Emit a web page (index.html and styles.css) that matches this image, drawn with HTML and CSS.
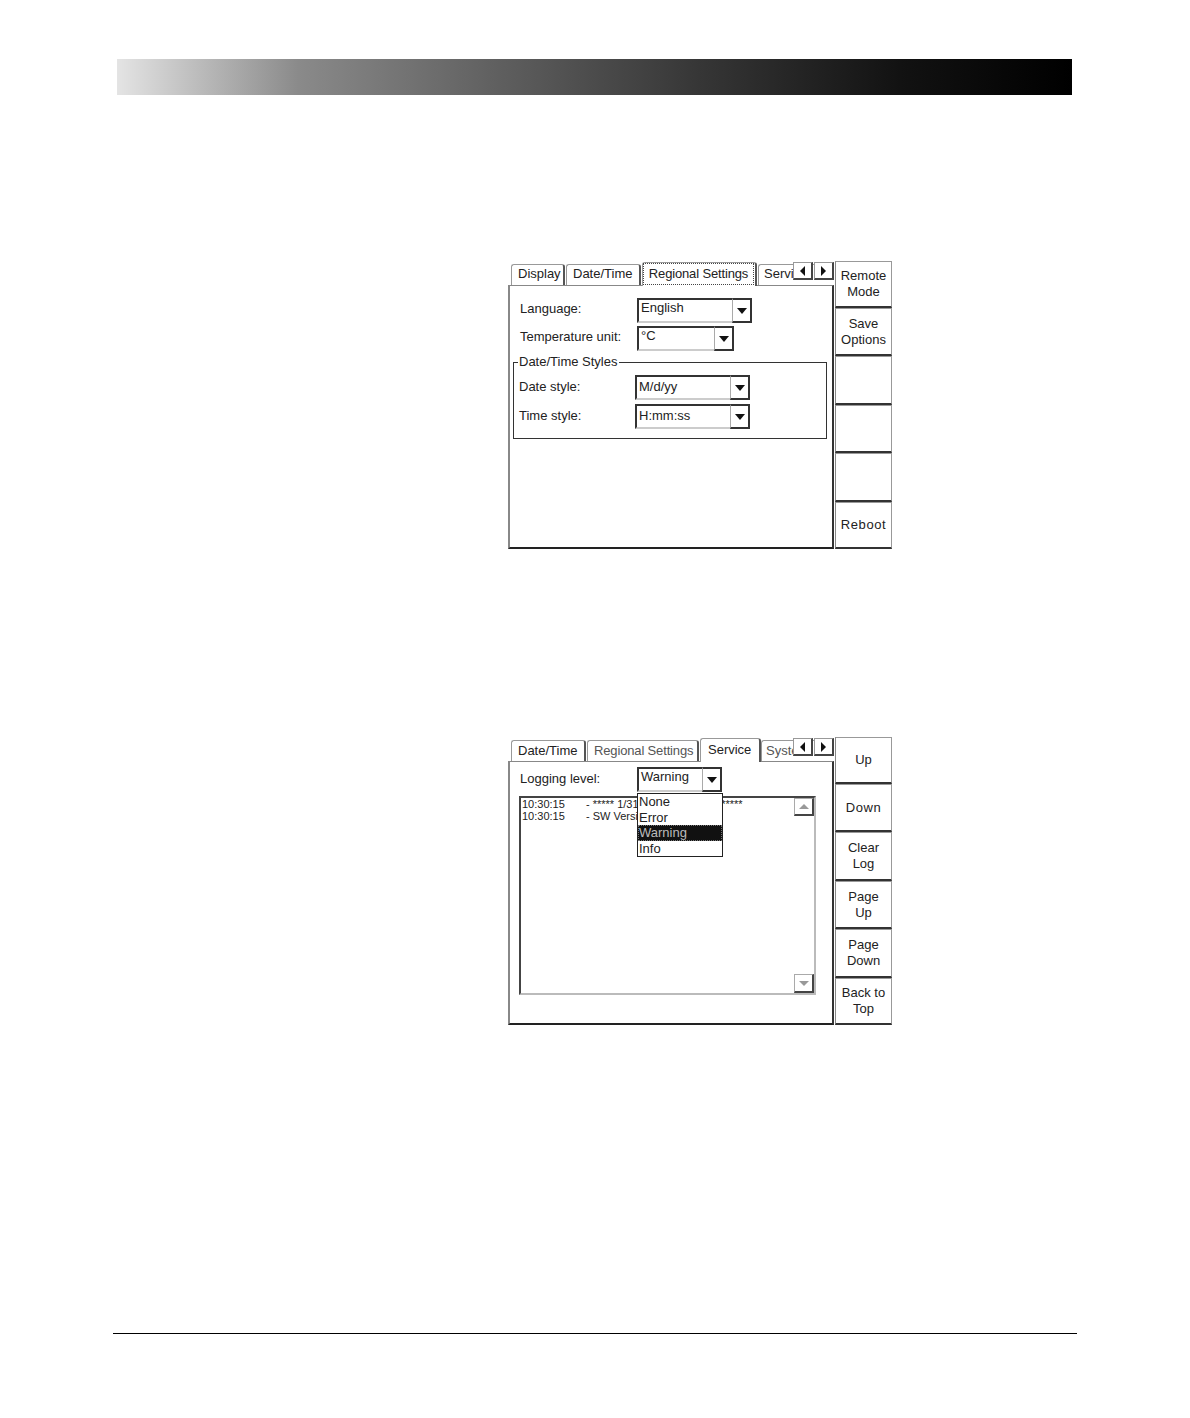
FILE: index.html
```html
<!DOCTYPE html>
<html lang="en">
<head>
<meta charset="utf-8">
<title>Settings screens</title>
<link rel="stylesheet" href="styles.css">
</head>
<body>
<div class="page-header"></div>

<section class="screen screen-first">
  <div class="main">
    <div class="tabs">
      <div class="tab tab-display">Display</div>
      <div class="tab tab-date">Date/Time</div>
      <div class="tab tab-focus"><span class="focus-ring">Regional Settings</span></div>
      <div class="tab tab-clip">Service</div>
      <div class="tab-arrows">
        <div class="arrow-btn"><span class="tri-left"></span></div>
        <div class="arrow-btn"><span class="tri-right"></span></div>
      </div>
    </div>
    <div class="panel">
      <div class="row row-top">
        <span class="label">Language:</span>
        <div class="combo combo-wide"><span class="value">English</span><span class="drop"><span class="tri-down"></span></span></div>
      </div>
      <div class="row row-top row-temp">
        <span class="label">Temperature unit:</span>
        <div class="combo combo-mid"><span class="value">°C</span><span class="drop"><span class="tri-down"></span></span></div>
      </div>
      <fieldset class="group">
        <legend>Date/Time Styles</legend>
        <div class="row row-group">
          <span class="label label-group">Date style:</span>
          <div class="combo combo-wide"><span class="value">M/d/yy</span><span class="drop"><span class="tri-down"></span></span></div>
        </div>
        <div class="row row-group row-group-next">
          <span class="label label-group">Time style:</span>
          <div class="combo combo-wide"><span class="value">H:mm:ss</span><span class="drop"><span class="tri-down"></span></span></div>
        </div>
      </fieldset>
    </div>
  </div>
  <div class="softkeys">
    <div class="key">Remote<br>Mode</div>
    <div class="key">Save<br>Options</div>
    <div class="key"></div>
    <div class="key"></div>
    <div class="key"></div>
    <div class="key key-spaced">Reboot</div>
  </div>
</section>

<section class="screen screen-second">
  <div class="main">
    <div class="tabs">
      <div class="tab tab-date">Date/Time</div>
      <div class="tab tab-regional">Regional Settings</div>
      <div class="tab tab-active">Service</div>
      <div class="tab tab-clip tab-muted">System</div>
      <div class="tab-arrows">
        <div class="arrow-btn"><span class="tri-left"></span></div>
        <div class="arrow-btn"><span class="tri-right"></span></div>
      </div>
    </div>
    <div class="panel panel-log">
      <div class="row row-top row-logging">
        <span class="label">Logging level:</span>
        <div class="combo combo-small"><span class="value">Warning</span><span class="drop"><span class="tri-down"></span></span></div>
      </div>
      <div class="logbox">
        <div class="log-line"><span class="log-time">10:30:15</span><span>- ***** 1/31/2007 &nbsp;10:30:15 &nbsp;*****</span></div>
        <div class="log-line"><span class="log-time">10:30:15</span><span>- SW Version</span></div>
        <div class="scroll-btn scroll-up"><span class="tri-up"></span></div>
        <div class="scroll-btn scroll-down"><span class="tri-down tri-gray"></span></div>
      </div>
      <ul class="dropdown">
        <li>None</li>
        <li>Error</li>
        <li class="selected">Warning</li>
        <li>Info</li>
      </ul>
    </div>
  </div>
  <div class="softkeys">
    <div class="key">Up</div>
    <div class="key key-spaced">Down</div>
    <div class="key">Clear<br>Log</div>
    <div class="key">Page<br>Up</div>
    <div class="key">Page<br>Down</div>
    <div class="key">Back to<br>Top</div>
  </div>
</section>

<div class="page-rule"></div>
</body>
</html>
```

FILE: styles.css
```css
* { box-sizing: border-box; }

html, body { margin: 0; padding: 0; background: #fff; }

body {
  width: 1190px;
  height: 1418px;
  overflow: hidden;
  font-family: "Liberation Sans", Arial, sans-serif;
  font-size: 13px;
  color: #222;
}

.page-header {
  width: 955px;
  height: 36px;
  margin: 59px 0 0 117px;
  background: linear-gradient(90deg, #e4e4e4 0%, #8a8a8a 19%, #5f5f5f 40%, #363636 61%, #121212 82%, #000 100%);
}

.screen {
  display: flex;
  width: 384px;
  height: 288px;
  margin-left: 508px;
}
.screen-first { margin-top: 166px; }
.screen-second { margin-top: 188px; }

.page-rule {
  width: 964px;
  height: 1px;
  margin: 308px 0 0 113px;
  background: #000;
}

/* left part */
.main {
  display: flex;
  flex-direction: column;
  width: 326px;
  height: 288px;
  margin-right: 1px;
}

.tabs {
  position: relative;
  z-index: 1;
  display: flex;
  align-items: flex-end;
  flex: 0 0 25px;
  height: 25px;
  padding-left: 3px;
  overflow: hidden;
}

.tab {
  flex: none;
  height: 21px;
  margin: 0 1px 1px 0;
  padding: 0 5px 0 6px;
  border: 1px solid #999;
  border-bottom: 0;
  border-right: 2px solid #555;
  border-radius: 3px 3px 0 0;
  line-height: 17px;
  white-space: nowrap;
}
.tab-display { width: 54px; }
.tab-date { width: 75px; }
.tab-focus {
  width: 115px;
  height: 24px;
  margin-bottom: 0;
  padding: 0 1px 0 0;
  background: #fff;
  line-height: 20px;
}
.focus-ring {
  display: block;
  height: 22px;
  border: 1px dotted #444;
  letter-spacing: -0.15px;
  text-align: center;
}
.tab-clip { width: 60px; border-right: 0; padding-left: 5px; }
.tab-regional { width: 112px; color: #555; letter-spacing: -0.15px; }
.tab-muted { padding-left: 4px; color: #555; }
.screen-second .tab { line-height: 19px; }
.screen-second .tab-active {
  width: 61px;
  height: 24px;
  margin: 0;
  padding-left: 7px;
  background: #fff;
  line-height: 21px;
}

.tab-arrows {
  position: absolute;
  top: 1px;
  right: 0;
  display: flex;
  gap: 1px;
}
.arrow-btn {
  display: flex;
  align-items: center;
  justify-content: center;
  width: 20px;
  height: 18px;
  background: #fff;
  border: 1px solid #999;
  border-right: 2px solid #444;
  border-bottom: 2px solid #444;
}

.tri-left, .tri-right, .tri-up, .tri-down {
  display: block;
  width: 0;
  height: 0;
  border-style: solid;
}
.tri-left { border-width: 5px 5px 5px 0; border-color: transparent #111 transparent transparent; }
.tri-right { border-width: 5px 0 5px 5px; border-color: transparent transparent transparent #111; }
.tri-down { border-width: 6px 5px 0; border-color: #111 transparent transparent; }
.tri-up { border-width: 0 5px 5px; border-color: transparent transparent #999; }
.tri-gray { border-width: 5px 5px 0; border-color: #999 transparent transparent; }

.panel {
  position: relative;
  flex: 1;
  margin-top: -1px;
  padding: 12px 0 0 0;
  background: #fff;
  border-top: 1px solid #888;
  border-left: 2px solid #888;
  border-right: 2px solid #333;
  border-bottom: 2px solid #222;
}
.panel-log { padding-top: 5px; }

.row { display: flex; align-items: center; height: 25px; }
.row-top { padding-left: 10px; }
.row-temp { margin-top: 3px; }
.label { flex: 0 0 117px; padding-bottom: 5px; }
.row-logging .label { padding-bottom: 3px; }
.label-group { flex-basis: 116px; padding-bottom: 2px; }

.combo {
  display: flex;
  height: 25px;
  border: 2px solid #333;
  border-right-color: #ccc;
  border-bottom-color: #ccc;
  background: #fff;
}
.combo-wide { width: 115px; }
.combo-mid { width: 97px; }
.combo-small { width: 85px; }
.value { flex: 1; padding-left: 2px; line-height: 16px; }
.row-group .value { line-height: 19px; }
.drop {
  display: flex;
  align-items: center;
  justify-content: center;
  flex: 0 0 20px;
  margin: -2px -2px -2px 0;
  border: 1px solid #aaa;
  border-right: 2px solid #333;
  border-bottom: 2px solid #333;
  border-top: 2px solid #333;
}

.group {
  height: 85px;
  margin: 3px 5px 0 3px;
  padding: 5px 0 0 5px;
  border: 1px solid #333;
  min-width: 0;
}
.group legend {
  margin-left: -1px;
  padding: 0 1px;
  line-height: 16px;
}
.row-group-next { margin-top: 4px; }

/* log list */
.logbox {
  position: relative;
  width: 297px;
  height: 199px;
  margin: 4px 0 0 9px;
  padding: 0 0 0 1px;
  border: 2px solid #444;
  border-right-color: #bbb;
  border-bottom-color: #bbb;
  font-size: 11px;
  line-height: 12px;
}
.log-line { display: flex; white-space: nowrap; }
.log-time { flex: 0 0 64px; }

.scroll-btn {
  position: absolute;
  right: 0;
  display: flex;
  align-items: center;
  justify-content: center;
  width: 20px;
  background: #fff;
  border: 1px solid #aaa;
  border-right: 2px solid #444;
  border-bottom: 2px solid #444;
}
.scroll-up { top: 0; height: 18px; }
.scroll-down { bottom: 0; height: 19px; }

.dropdown {
  position: absolute;
  top: 31px;
  left: 127px;
  width: 86px;
  height: 64px;
  margin: 0;
  padding: 0 0 0 1px;
  list-style: none;
  background: #fff;
  border: 1px solid #222;
  line-height: 15.6px;
}
.dropdown li { height: 15.6px; }
.dropdown .selected {
  margin-left: -1px;
  padding-left: 1px;
  background: #111;
  color: #bbb;
  outline: 1px dotted #777;
  outline-offset: -1px;
}

/* soft keys */
.softkeys {
  display: grid;
  grid-template-rows: 47px 48px 49px 48px 49px 47px;
  width: 57px;
  height: 288px;
}
.key {
  display: flex;
  align-items: center;
  justify-content: center;
  border: 1px solid #999;
  border-bottom: 2px solid #333;
  border-left: 1px solid #888;
  line-height: 16px;
  text-align: center;
}
.key-spaced { letter-spacing: 0.6px; }
```
